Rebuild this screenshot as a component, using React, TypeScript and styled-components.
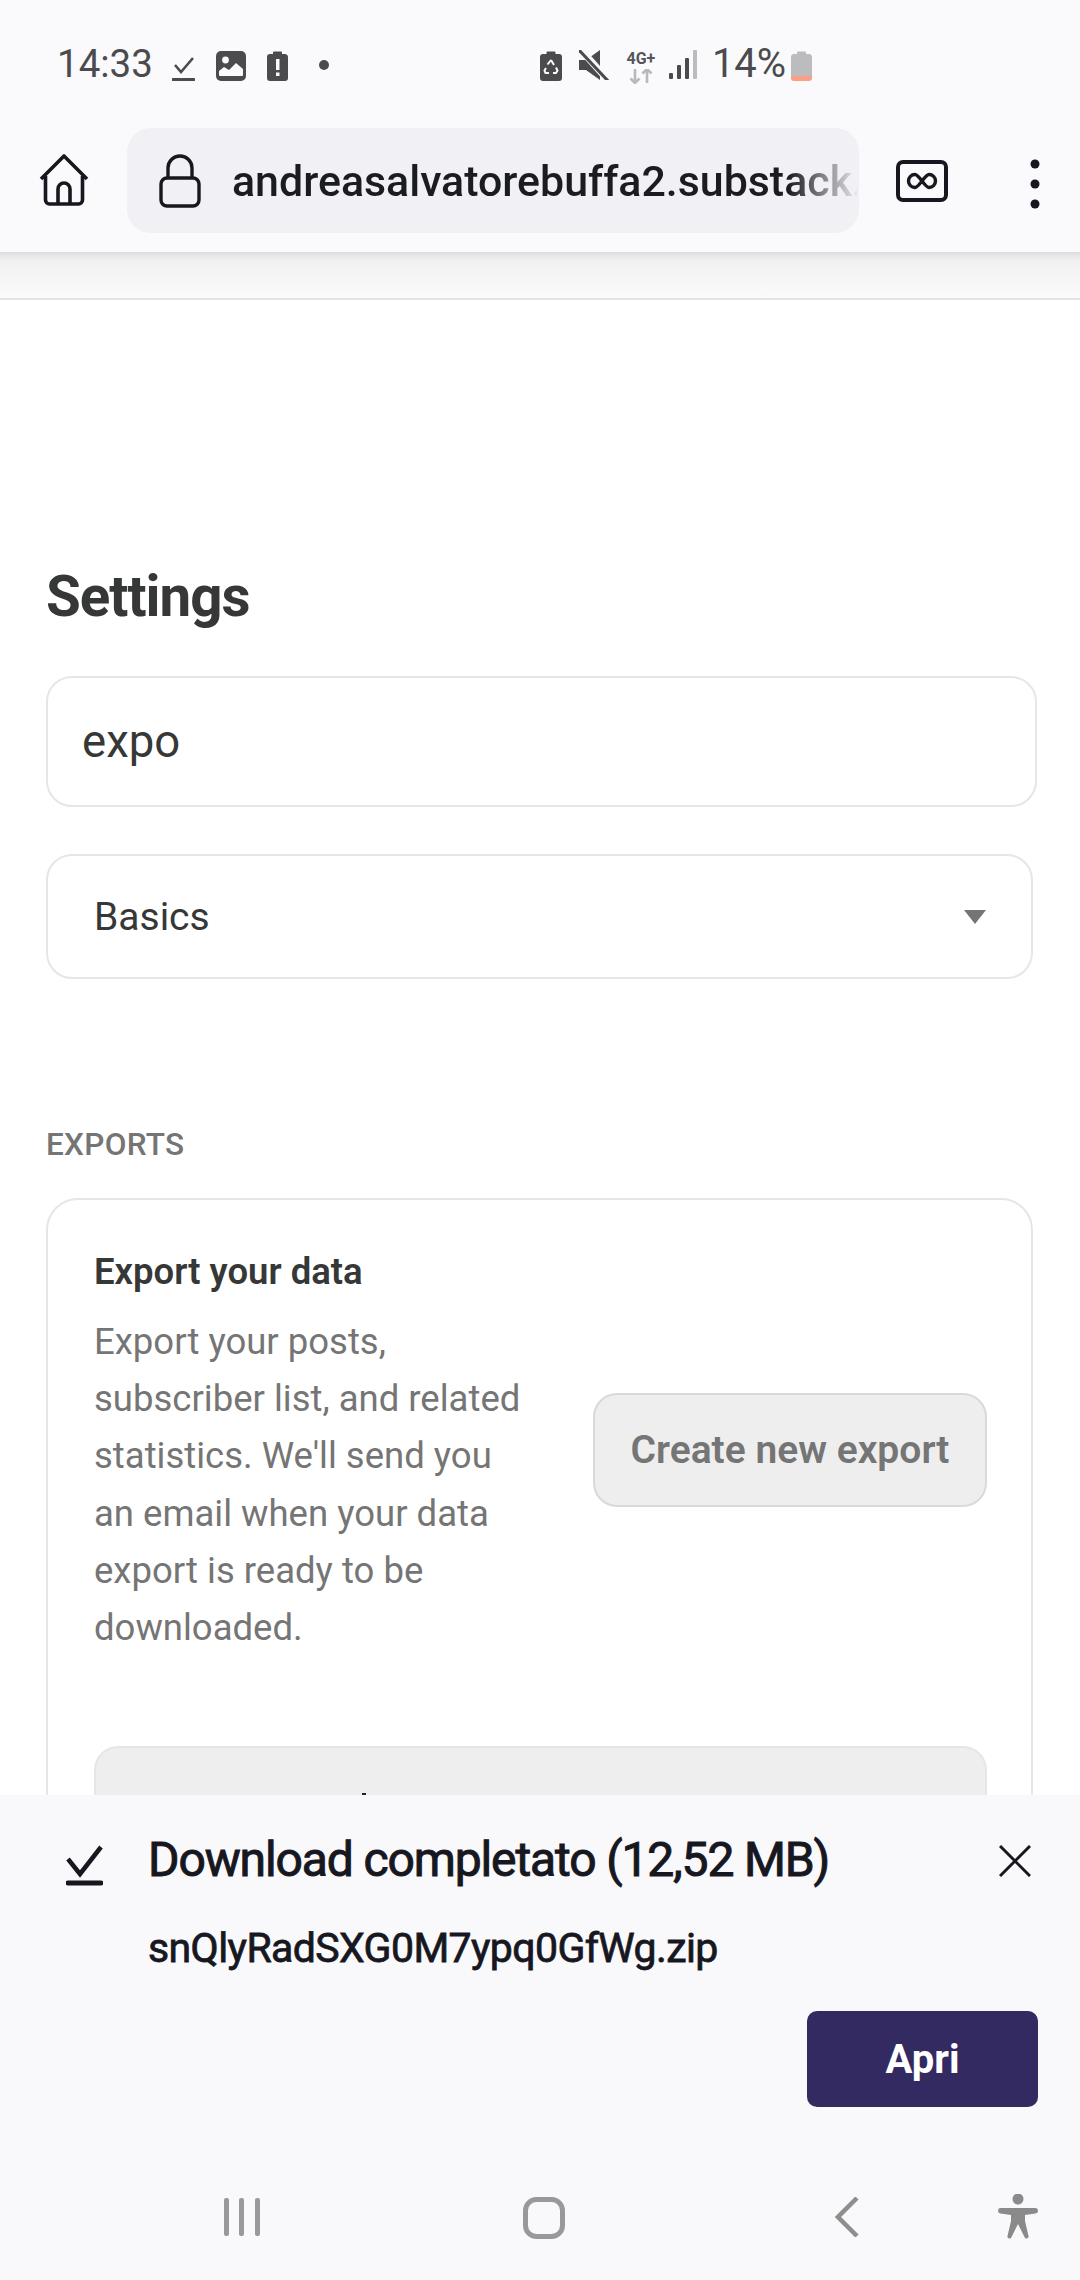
import React from "react";
import styled, { createGlobalStyle } from "styled-components";

const Global = createGlobalStyle`
  html, body { margin: 0; padding: 0; background: #fff; }
  * { box-sizing: border-box; }
  body { font-family: Roboto, "Liberation Sans", sans-serif; }
`;

const Page = styled.div`
  width: 1080px;
  height: 2280px;
  display: flex;
  flex-direction: column;
  overflow: hidden;
  background: #fff;
`;

const Chrome = styled.header`
  height: 252px;
  flex: none;
  background: #fafafc;
  display: flex;
  flex-direction: column;
  position: relative;
  z-index: 1;
`;

const StatusBar = styled.div`
  height: 128px;
  flex: none;
  display: flex;
  align-items: flex-start;
  padding: 42px 0 0 57px;
`;

const StatusText = styled.span<{ $ml?: number; $size?: number }>`
  margin-left: ${(p) => p.$ml ?? 0}px;
  font-size: ${(p) => p.$size ?? 38.5}px;
  line-height: 44px;
  font-weight: 400;
  color: #4b4b4d;
  white-space: nowrap;
`;

const Glyph = styled.svg<{ $ml: number; $mt: number }>`
  display: block;
  flex: none;
  margin-left: ${(p) => p.$ml}px;
  margin-top: ${(p) => p.$mt}px;
`;

const NetStack = styled.div`
  flex: none;
  width: 32px;
  margin: 9px 0 0 16px;
  display: flex;
  flex-direction: column;
  align-items: center;
  gap: 3px;
`;

const NetType = styled.span`
  font-size: 16px;
  line-height: 15px;
  font-weight: 700;
  color: #55555a;
  white-space: nowrap;
`;

const Toolbar = styled.div`
  flex: 1;
  display: flex;
  align-items: flex-start;
  padding-left: 39px;
`;

const AddressBar = styled.div`
  width: 732px;
  height: 105px;
  margin-left: 38px;
  border-radius: 24px;
  background: #f0f0f5;
  display: flex;
  align-items: center;
  padding-left: 32px;
  overflow: hidden;
`;

const Url = styled.span`
  margin-left: 31px;
  width: 625px;
  flex: none;
  overflow: hidden;
  white-space: nowrap;
  font-size: 42.9px;
  font-weight: 500;
  color: #1b1b22;
  -webkit-mask-image: linear-gradient(to right, #000 89%, rgba(0,0,0,0.05) 100%);
  mask-image: linear-gradient(to right, #000 89%, rgba(0,0,0,0.05) 100%);
`;

const ChromeShadow = styled.div`
  height: 48px;
  flex: none;
  background: linear-gradient(to bottom, #dcdcdc 0, #f0f0f0 8px, #f8f8f8 34px, #fafafa 100%);
  border-bottom: 2px solid #e3e3e3;
`;

const Content = styled.main`
  flex: 1;
  min-height: 0;
  overflow: hidden;
  padding: 0 47px 0 46px;
`;

const Title = styled.h1`
  margin: 0;
  padding-top: 258px;
  font-size: 56.5px;
  line-height: 78px;
  font-weight: 700;
  letter-spacing: -1px;
  color: #363737;
`;

const SearchBox = styled.div`
  margin-top: 40px;
  width: 991px;
  height: 131px;
  border: 2px solid #e6e6e6;
  border-radius: 26px;
  display: flex;
  align-items: center;
  padding-left: 34px;
  font-size: 45.5px;
  color: #363737;
`;

const SelectBox = styled.div`
  margin-top: 47px;
  width: 100%;
  height: 125px;
  border: 2px solid #e6e6e6;
  border-radius: 26px;
  display: flex;
  align-items: center;
  justify-content: space-between;
  padding: 0 45px 0 46px;
  font-size: 39px;
  color: #363737;
`;

const Caret = styled.span`
  width: 0;
  height: 0;
  border-left: 11px solid transparent;
  border-right: 11px solid transparent;
  border-top: 14px solid #757575;
`;

const SectionLabel = styled.h2`
  margin: 0;
  padding-top: 148px;
  font-size: 31.5px;
  line-height: 36px;
  font-weight: 500;
  letter-spacing: 0.3px;
  color: #757575;
  text-transform: uppercase;
`;

const Card = styled.section`
  margin-top: 35px;
  border: 2px solid #e6e6e6;
  border-radius: 32px;
  padding: 50px 44px 0 46px;
  height: 800px;
`;

const ExportRow = styled.div`
  display: flex;
  align-items: center;
  justify-content: space-between;
`;

const ExportCopy = styled.div`
  width: 445px;
`;

const ExportTitle = styled.h3`
  margin: 0;
  font-size: 36.5px;
  line-height: 44px;
  font-weight: 600;
  color: #363737;
`;

const ExportText = styled.p`
  margin: 19px 0 0;
  font-size: 36.5px;
  line-height: 57.2px;
  color: #757575;
`;

const ExportButton = styled.div`
  width: 394px;
  height: 114px;
  flex: none;
  margin-top: -7px;
  background: #eeeeee;
  border: 2px solid #d9d9d9;
  border-radius: 24px;
  display: flex;
  align-items: center;
  justify-content: center;
  font-size: 39px;
  font-weight: 600;
  color: #757575;
`;

const Panel = styled.div`
  position: relative;
  margin-top: 90px;
  height: 200px;
  background: #eeeeee;
  border: 2px solid #e6e6e6;
  border-radius: 24px;
`;

const ClippedGlyph = styled.span`
  position: absolute;
  left: 266px;
  top: 45px;
  width: 4px;
  height: 10px;
  background: #222;
`;

const Sheet = styled.section`
  height: 485px;
  flex: none;
  background: #f9f9fb;
  display: flex;
  flex-direction: column;
`;

const SheetHead = styled.div`
  display: flex;
  align-items: flex-start;
  padding: 37px 0 0 66px;
`;

const SheetTitle = styled.div`
  margin-left: 45px;
  width: 851px;
  font-size: 48px;
  line-height: 56px;
  font-weight: 400;
  letter-spacing: -1.12px;
  -webkit-text-stroke: 1px #17171f;
  color: #17171f;
  white-space: nowrap;
`;

const FileName = styled.div`
  margin: 37px 0 0 148px;
  font-size: 41px;
  line-height: 46px;
  font-weight: 400;
  letter-spacing: -0.6px;
  -webkit-text-stroke: 0.8px #17171f;
  color: #17171f;
`;

const SheetActions = styled.div`
  display: flex;
  justify-content: flex-end;
  padding: 40px 42px 0 0;
`;

const OpenButton = styled.div`
  width: 231px;
  height: 96px;
  border-radius: 10px;
  background: #332a62;
  color: #fff;
  display: flex;
  align-items: center;
  justify-content: center;
  font-size: 40px;
  font-weight: 700;
`;

const NavBar = styled.nav`
  flex: 1;
  display: flex;
  align-items: flex-start;
  padding: 90px 0 0 222px;
`;

const SheetIcon = styled.svg`
  flex: none;
  margin-top: 13px;
`;

export default function App() {
  return (
    <Page>
      <Global />
      <Chrome>
        <StatusBar>
          <StatusText>14:33</StatusText>
          <Glyph $ml={19} $mt={15} width="23" height="24" viewBox="0 0 23 24" fill="none" stroke="#4b4b4d">
            <path d="M3 8l6 7L21 1" strokeWidth="2.6" />
            <path d="M1 22.5h21" strokeWidth="3" strokeLinecap="round" />
          </Glyph>
          <Glyph $ml={21} $mt={9} width="30" height="30" viewBox="0 0 30 30">
            <rect width="30" height="30" rx="5" fill="#4b4b4d" />
            <circle cx="9.5" cy="9" r="3.4" fill="#fafafc" />
            <path d="M3 24v-4l5-4 5 3 7-7 7 6v6a1 1 0 0 1-1 1H4a1 1 0 0 1-1-1z" fill="#fafafc" />
          </Glyph>
          <Glyph $ml={21} $mt={8} width="21" height="31" viewBox="0 0 21 31">
            <path d="M6 2.500a1 1 0 0 1 1-1h7a1 1 0 0 1 1 1V4h2.500A3 3 0 0 1 21 7v21a3 3 0 0 1-3 3H3a3 3 0 0 1-3-3V7a3 3 0 0 1 3-3h3z" fill="#4b4b4d" />
            <rect x="9" y="9" width="3.500" height="11" fill="#fafafc" />
            <rect x="9" y="22.500" width="3.500" height="3.500" fill="#fafafc" />
          </Glyph>
          <Glyph $ml={31} $mt={18} width="10" height="10" viewBox="0 0 10 10">
            <circle cx="5" cy="5" r="5" fill="#4b4b4d" />
          </Glyph>
          <Glyph $ml={211} $mt={8} width="22" height="31" viewBox="0 0 22 31">
            <path d="M6.500 2.500a1 1 0 0 1 1-1h7a1 1 0 0 1 1 1V4H19a3 3 0 0 1 3 3v21a3 3 0 0 1-3 3H3a3 3 0 0 1-3-3V7a3 3 0 0 1 3-3h3.500z" fill="#4b4b4d" />
            <path d="M11 10l3 5M16 17.500l1.500 3-1.500 2.500h-3M9 23H5.500L4.500 20.500 6 18M7.500 14.500L11 10" fill="none" stroke="#fafafc" strokeWidth="2" />
          </Glyph>
          <Glyph $ml={17} $mt={8} width="30" height="30" viewBox="0 0 30 30">
            <path d="M0 10h7L21 0v30L7 20H0z" fill="#4b4b4d" />
            <path d="M2 0l27 30" stroke="#fafafc" strokeWidth="7" fill="none" />
            <path d="M0 0l29 31" stroke="#4b4b4d" strokeWidth="3" fill="none" />
          </Glyph>
          <NetStack>
            <NetType>4G+</NetType>
            <svg width="32" height="15" viewBox="0 0 32 15" fill="none" stroke="#b9b9bb" strokeWidth="2.600">
              <path d="M10 0v14M5.500 9.500L10 14l4.500-4.500" />
              <path d="M22 14V0M17.500 4.500L22 0l4.500 4.500" />
            </svg>
          </NetStack>
          <Glyph $ml={12} $mt={8} width="28" height="30" viewBox="0 0 28 30">
            <rect x="0" y="23" width="4" height="6" rx="1" fill="#4b4b4d" />
            <rect x="8" y="15" width="4" height="14" rx="1" fill="#4b4b4d" />
            <rect x="16" y="8" width="4" height="21" rx="1" fill="#4b4b4d" />
            <rect x="24" y="0" width="4" height="29" rx="1" fill="#bcbcbe" />
          </Glyph>
          <StatusText $ml={15} $size={40}>14%</StatusText>
          <Glyph $ml={5} $mt={8} width="21" height="31" viewBox="0 0 21 31">
            <path d="M6 2.500a1 1 0 0 1 1-1h7a1 1 0 0 1 1 1V4h2.500A3 3 0 0 1 21 7v19H0V7a3 3 0 0 1 3-3h3z" fill="#bcbcbe" />
            <path d="M0 26h21v2a3 3 0 0 1-3 3H3a3 3 0 0 1-3-3z" fill="#fb9f84" />
          </Glyph>
        </StatusBar>
        <Toolbar>
          <Glyph $ml={0} $mt={26} width="50" height="52" viewBox="0 0 50 52" fill="none" stroke="#17171f" strokeWidth="3.600" strokeLinejoin="round">
            <path d="M2 25L25 2l23 23M6.500 22v24a4 4 0 0 0 4 4h29a4 4 0 0 0 4-4V22" />
            <path d="M19 50V35a6 6 0 0 1 12 0v15" />
          </Glyph>
          <AddressBar>
            <svg width="42" height="54" viewBox="0 0 42 54" fill="none" stroke="#17171f" strokeWidth="3.400">
              <rect x="2" y="24" width="38" height="28" rx="6" />
              <path d="M9 24V14a12 12 0 0 1 24 0v10" />
            </svg>
            <Url>andreasalvatorebuffa2.substack.com</Url>
          </AddressBar>
          <Glyph $ml={37} $mt={32} width="52" height="42" viewBox="0 0 52 42">
            <rect x="2" y="2" width="48" height="38" rx="5" fill="none" stroke="#17171f" strokeWidth="4" />
            <path d="M19 14.500a6 6 0 1 0 0 13c4 0 10-13 14-13a6 6 0 1 1 0 13c-4 0-10-13-14-13z" fill="none" stroke="#17171f" strokeWidth="3.400" />
          </Glyph>
          <Glyph $ml={82} $mt={31} width="10" height="50" viewBox="0 0 10 50">
            <circle cx="5" cy="5" r="4.500" fill="#17171f" />
            <circle cx="5" cy="25" r="4.500" fill="#17171f" />
            <circle cx="5" cy="45" r="4.500" fill="#17171f" />
          </Glyph>
        </Toolbar>
      </Chrome>
      <ChromeShadow />
      <Content>
        <Title>Settings</Title>
        <SearchBox>expo</SearchBox>
        <SelectBox>
          Basics
          <Caret />
        </SelectBox>
        <SectionLabel>Exports</SectionLabel>
        <Card>
          <ExportRow>
            <ExportCopy>
              <ExportTitle>Export your data</ExportTitle>
              <ExportText>
                Export your posts, subscriber list, and related statistics. We'll send you an email when your data export is ready to be downloaded.
              </ExportText>
            </ExportCopy>
            <ExportButton>Create new export</ExportButton>
          </ExportRow>
          <Panel>
            <ClippedGlyph />
          </Panel>
        </Card>
      </Content>
      <Sheet>
        <SheetHead>
          <SheetIcon width="37" height="41" viewBox="0 0 37 41" fill="none" stroke="#17171f">
            <path d="M2 14l12 15L35 2" strokeWidth="4.500" />
            <path d="M2 38h33" strokeWidth="5" strokeLinecap="round" />
          </SheetIcon>
          <SheetTitle>Download completato (12,52 MB)</SheetTitle>
          <SheetIcon width="32" height="32" viewBox="0 0 32 32" fill="none" stroke="#17171f" strokeWidth="3">
            <path d="M1 1l30 30M31 1L1 31" />
          </SheetIcon>
        </SheetHead>
        <FileName>snQlyRadSXG0M7ypq0GfWg.zip</FileName>
        <SheetActions>
          <OpenButton>Apri</OpenButton>
        </SheetActions>
        <NavBar>
          <svg width="40" height="40" viewBox="0 0 40 40" fill="#999">
            <rect x="2" y="1" width="5" height="38" rx="2" />
            <rect x="17" y="1" width="5" height="38" rx="2" />
            <rect x="33" y="1" width="5" height="38" rx="2" />
          </svg>
          <Glyph $ml={261} $mt={0} width="42" height="42" viewBox="0 0 42 42" fill="none" stroke="#999" strokeWidth="5">
            <rect x="2.500" y="2.500" width="37" height="37" rx="11" />
          </Glyph>
          <Glyph $ml={270} $mt={0} width="24" height="40" viewBox="0 0 24 40" fill="none" stroke="#8e8e8e" strokeWidth="4.500">
            <path d="M22 1L3 20l19 19" />
          </Glyph>
          <Glyph $ml={139} $mt={-3} width="40" height="46" viewBox="0 0 40 46" fill="#8a8a8a">
            <circle cx="20" cy="5" r="5.500" />
            <path d="M3 14h34a2.700 2.700 0 0 1 .5 5.400L27 21v6l3.500 15a2 2 0 0 1-4 1L20 30l-6.500 13a2 2 0 0 1-4-1L13 27v-6L2.500 19.400A2.700 2.700 0 0 1 3 14z" />
          </Glyph>
        </NavBar>
      </Sheet>
    </Page>
  );
}
